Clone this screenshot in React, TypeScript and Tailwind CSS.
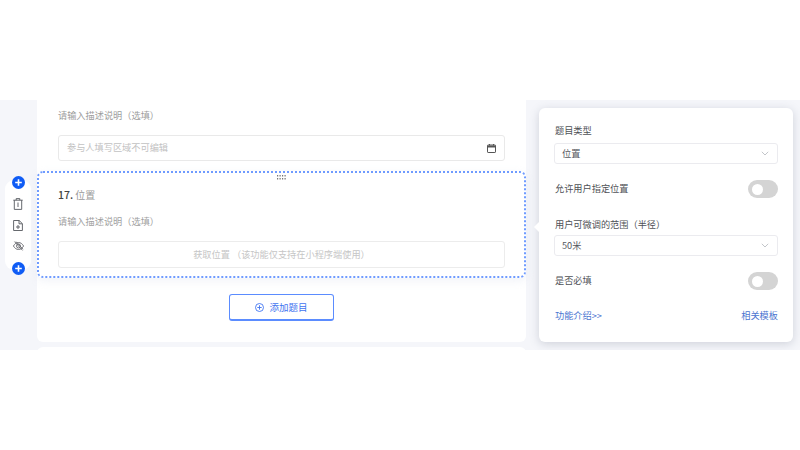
import React from "react";

const font = { fontFamily: '"Noto Sans CJK SC", "Noto Sans", sans-serif' };

function Plus() {
  return (
    <svg width="13" height="13" viewBox="0 0 13 13" className="shrink-0">
      <circle cx="6.5" cy="6.5" r="6.5" fill="#0f5cf5" />
      <path d="M6.5 3.2v6.6M3.2 6.5h6.6" stroke="#fff" strokeWidth="1.6" />
    </svg>
  );
}

function Toggle() {
  return (
    <div className="w-[30px] h-[18px] rounded-full bg-[#d4d4d4] flex items-center pl-[4px]">
      <div className="w-[11px] h-[11px] rounded-full bg-white" />
    </div>
  );
}

function Select({ value }: { value: string }) {
  return (
    <div className="-ml-[1px] h-[21px] border border-[#ebebef] rounded-[3px] flex items-center justify-between pl-[7px] pr-[8px] text-[9.2px] text-[#55585e]">
      <span>{value}</span>
      <svg width="8" height="5" viewBox="0 0 8 5" fill="none">
        <path d="M.8.8 4 4 7.2.8" stroke="#b4b7bd" strokeWidth=".8" />
      </svg>
    </div>
  );
}

export default function App() {
  return (
    <div className="w-[800px] h-[450px] bg-white overflow-hidden flex flex-col" style={font}>
      <div className="h-[100px] shrink-0" />
      <div className="h-[250px] shrink-0 bg-[#f5f6fa] flex overflow-hidden">
        <div className="w-[37px] shrink-0 pt-[80px] pl-[5px]">
          <div className="w-[26px] h-[90px] bg-white rounded-[9px] flex flex-col items-center">
            <div className="-mt-[4px] h-[13px] shrink-0"><Plus /></div>
            <svg className="mt-[9px] shrink-0" width="10" height="12" viewBox="0 0 10 12" fill="none" stroke="#55585d" strokeWidth=".9">
              <path d="M.3 2.2h9.400M3.200 2.200V.6h3.600v1.600M1.300 2.200v9.200h7.400V2.200M5 4.500v4.500" />
            </svg>
            <svg className="mt-[10px] shrink-0" width="10" height="11" viewBox="0 0 10 11" fill="none" stroke="#55585d" strokeWidth=".9">
              <path d="M.6.5h5.600l3.200 3.200v6.800H.6zM6 .5v3.300h3.400M5 5v4M3 7h4" />
            </svg>
            <svg className="mt-[10px] shrink-0" width="11" height="10" viewBox="0 0 11 10" fill="none" stroke="#66686d" strokeWidth=".9">
              <path d="M.4 5C1.800 2.600 3.600 1.500 5.500 1.500S9.200 2.600 10.600 5C9.200 7.400 7.400 8.500 5.500 8.500S1.800 7.400.4 5z" />
              <circle cx="5.500" cy="5" r="2" />
              <path d="M1.500.6l8 8.800M3 .6l7 7.600" />
            </svg>
            <div className="mt-[11px] h-[13px] shrink-0"><Plus /></div>
          </div>
        </div>

        <div className="w-[489px] shrink-0 flex flex-col gap-[5px]">
          <div className="h-[242px] shrink-0 bg-white rounded-b-[6px] flex flex-col">
            <div className="px-[21px] pt-[7px]">
              <div className="h-[16px] leading-[16px] text-[9.2px] text-[#9c9c9c]">请输入描述说明（选填）</div>
              <div className="mt-[12px] h-[26px] border border-[#e9e9e9] rounded-[3px] flex items-center justify-between pl-[8px] pr-[8px] text-[9.2px] text-[#c2c2c2]">
                <span>参与人填写区域不可编辑</span>
                <svg width="9" height="9" viewBox="0 0 9 9" fill="none">
                  <rect x=".5" y="1" width="8" height="7.500" rx=".6" stroke="#555" />
                  <path d="M.5 1.500h8v2h-8z" fill="#555" />
                  <path d="M2.500 0v1.500M6.500 0v1.500" stroke="#555" />
                </svg>
              </div>
            </div>
            <div className="relative mt-[10px] h-[107px] border-2 border-dotted border-[#6f9bff] rounded-[6px] px-[19px] pt-[14px] shadow-[0_3px_8px_rgba(225,228,240,0.45)]">
              <svg width="9" height="5" viewBox="0 0 9 5" fill="#777" className="absolute top-[2px] left-[238px]">
                <path d="M0 0h1.200v1.500H0zM2.500 0h1.200v1.500H2.500zM5 0h1.200v1.500H5zM7.500 0h1.200v1.500H7.500zM0 3h1.200v1.500H0zM2.500 3h1.200v1.500H2.500zM5 3h1.200v1.500H5zM7.500 3h1.200v1.500H7.500z" />
              </svg>
              <div className="h-[16px] leading-[16px] text-[10px] text-[#9a9a9a]">
                <span className="text-[#444] text-[10.5px] font-medium">17.</span> 位置
              </div>
              <div className="mt-[10px] h-[16px] leading-[16px] text-[9.2px] text-[#a0a0a0]">请输入描述说明（选填）</div>
              <div className="mt-[12px] h-[27px] border border-[#ececec] rounded-[3px] flex items-center justify-center text-[9.2px] text-[#c6c6c6]">
                获取位置 （该功能仅支持在小程序端使用）
              </div>
            </div>
            <div className="flex justify-center mt-[16px]">
              <div className="w-[105px] h-[27px] border border-b-2 border-[#5b8cff] rounded-[3px] flex items-center justify-center gap-[5px] text-[9.5px] text-[#3f74f0]">
                <svg width="9" height="9" viewBox="0 0 9 9" fill="none" stroke="#3f74f0" strokeWidth=".9">
                  <circle cx="4.500" cy="4.500" r="4" />
                  <path d="M4.500 2.300v4.400M2.300 4.500h4.400" />
                </svg>
                <span>添加题目</span>
              </div>
            </div>
          </div>
          <div className="h-[10px] shrink-0 bg-white rounded-t-[6px]" />
        </div>

        <div className="flex-1 pt-[8px] pl-[13px] pr-[7px] relative">
          <div className="absolute left-[8px] top-[122px] w-0 h-0 border-y-[5px] border-y-transparent border-r-[5px] border-r-white" />
          <div className="h-[234px] bg-white rounded-[6px] shadow-[0_2px_10px_rgba(120,125,145,0.3)] pl-[16px] pr-[15px] pt-[14px] text-[9.2px] text-[#4e5156]">
            <div className="h-[16px] leading-[16px]">题目类型</div>
            <div className="mt-[5px]"><Select value="位置" /></div>
            <div className="mt-[16px] h-[18px] flex items-center justify-between">
              <span>允许用户指定位置</span>
              <Toggle />
            </div>
            <div className="mt-[18px] h-[16px] leading-[16px]">用户可微调的范围（半径）</div>
            <div className="mt-[3px]"><Select value="50米" /></div>
            <div className="mt-[16px] h-[18px] flex items-center justify-between">
              <span>是否必填</span>
              <Toggle />
            </div>
            <div className="mt-[17px] h-[16px] leading-[16px] flex justify-between text-[#4a74d0]">
              <span>功能介绍&gt;&gt;</span>
              <span>相关模板</span>
            </div>
          </div>
        </div>
      </div>
    </div>
  );
}
